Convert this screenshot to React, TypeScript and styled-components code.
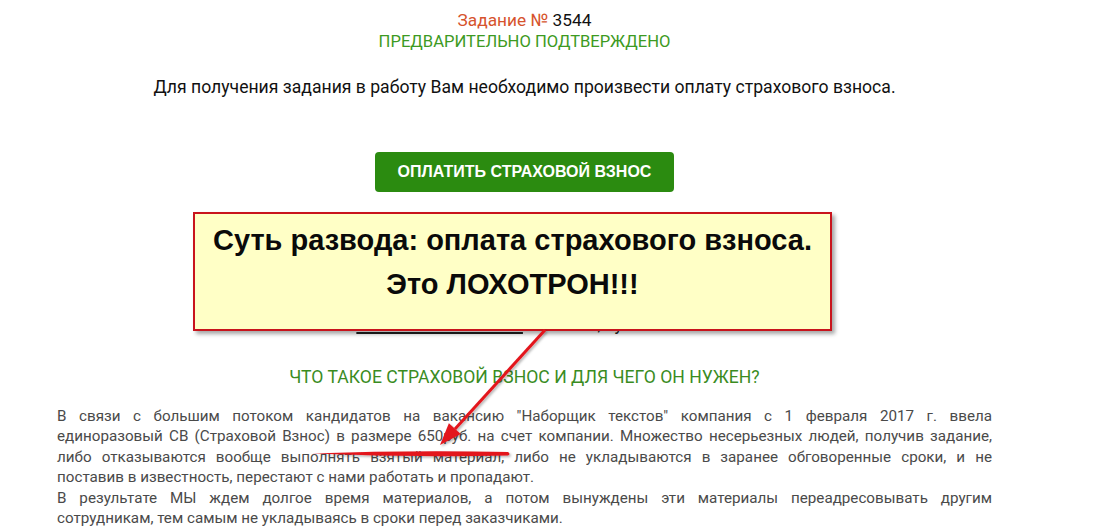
import React from 'react';
import styled, { createGlobalStyle } from 'styled-components';

const GlobalStyle = createGlobalStyle`
  html, body {
    margin: 0;
    padding: 0;
    background: #ffffff;
  }
  body {
    font-family: Roboto, "Noto Sans", Arial, sans-serif;
    width: 1114px;
    height: 527px;
    overflow: hidden;
  }
`;

const Page = styled.div`
  position: relative;
  width: 1114px;
  height: 527px;
  overflow: hidden;
`;

const Content = styled.div`
  width: 935px;
  margin-left: 57px;
  padding-top: 9px;
  display: flex;
  flex-direction: column;
  align-items: center;
`;

const TaskTitle = styled.div`
  font-size: 17.3px;
  line-height: 22px;
  color: #111;
`;

const TaskLabel = styled.span`
  color: #d6532d;
`;

const Status = styled.div`
  font-size: 16.6px;
  line-height: 22px;
  color: #3d9a22;
`;

const Lead = styled.p`
  margin: 23px 0 0;
  font-size: 17.6px;
  line-height: 22px;
  color: #111;
`;

const PayButton = styled.button`
  margin-top: 54px;
  width: 299px;
  height: 40px;
  border: none;
  border-radius: 4px;
  background: #2b8b10;
  color: #fff;
  font-family: "Liberation Sans", Arial, sans-serif;
  font-weight: 700;
  font-size: 16px;
  cursor: pointer;
`;

const HiddenNote = styled.div`
  margin-top: 121px;
  font-size: 17.6px;
  line-height: 22px;
  color: #222;

  u {
    text-decoration-thickness: 2px;
    text-underline-offset: 2px;
  }
`;

const Heading = styled.h3`
  margin: 31px 0 0;
  font-weight: 400;
  font-size: 17.6px;
  line-height: 22px;
  color: #3a8c1f;
`;

const Paragraph = styled.div`
  margin-top: 18px;
  align-self: stretch;
  font-size: 15.2px;
  line-height: 20.4px;
  color: #4a4a4a;
`;

const Line = styled.div<{ $last?: boolean }>`
  white-space: nowrap;
  text-align: justify;
  text-align-last: ${(p) => (p.$last ? 'left' : 'justify')};
`;

const Callout = styled.div`
  position: absolute;
  left: 193px;
  top: 212px;
  width: 639px;
  height: 119px;
  box-sizing: border-box;
  padding-top: 11px;
  background: #ffffc6;
  border: 2px solid #c8141c;
  box-shadow: 3px 3px 4px rgba(0, 0, 0, 0.35);
  font-family: "Liberation Sans", Arial, sans-serif;
  font-weight: 700;
  font-size: 29px;
  color: #0a0a0a;
  text-align: center;
`;

const CalloutLine = styled.div`
  line-height: 31px;
  & + & {
    margin-top: 13px;
  }
`;

const Overlay = styled.svg`
  position: absolute;
  left: 0;
  top: 0;
  pointer-events: none;
`;

const paragraphLines: { text: string; last?: boolean }[] = [
  { text: 'В связи с большим потоком кандидатов на вакансию "Наборщик текстов" компания с 1 февраля 2017 г. ввела' },
  { text: 'единоразовый СВ (Страховой Взнос) в размере 650руб. на счет компании. Множество несерьезных людей, получив задание,' },
  { text: 'либо отказываются вообще выполнять взятый материал, либо не укладываются в заранее обговоренные сроки, и не' },
  { text: 'поставив в известность, перестают с нами работать и пропадают.', last: true },
  { text: 'В результате МЫ ждем долгое время материалов, а потом вынуждены эти материалы переадресовывать другим' },
  { text: 'сотрудникам, тем самым не укладываясь в сроки перед заказчиками.', last: true },
];

export default function App() {
  return (
    <Page>
      <GlobalStyle />
      <Content>
        <TaskTitle>
          <TaskLabel>Задание №</TaskLabel> 3544
        </TaskTitle>
        <Status>ПРЕДВАРИТЕЛЬНО ПОДТВЕРЖДЕНО</Status>
        <Lead>Для получения задания в работу Вам необходимо произвести оплату страхового взноса.</Lead>
        <PayButton>ОПЛАТИТЬ СТРАХОВОЙ ВЗНОС</PayButton>
        <HiddenNote>
          <u>Начать выполнение</u> — 3 часа, сумма 950
        </HiddenNote>
        <Heading>ЧТО ТАКОЕ СТРАХОВОЙ ВЗНОС И ДЛЯ ЧЕГО ОН НУЖЕН?</Heading>
        <Paragraph>
          {paragraphLines.map((l, i) => (
            <Line key={i} $last={l.last}>
              {l.text}
            </Line>
          ))}
        </Paragraph>
      </Content>

      <Callout>
        <CalloutLine>Суть развода: оплата страхового взноса.</CalloutLine>
        <CalloutLine>Это ЛОХОТРОН!!!</CalloutLine>
      </Callout>

      <Overlay width="1114" height="527" viewBox="0 0 1114 527">
        <defs>
          <filter id="soft" x="-20%" y="-20%" width="140%" height="140%">
            <feDropShadow dx="1.5" dy="1.5" stdDeviation="1" floodColor="#000" floodOpacity="0.3" />
          </filter>
        </defs>
        <g filter="url(#soft)" fill="#e3141c" stroke="none">
          <path d="M543.9 329 L546.1 331 L456.1 430 L453.9 428 Z" />
          <path d="M440 445 L448.9 423.3 L460.7 434.1 Z" />
          <path d="M312 453.5 Q410 450 508 452 Q511 454 508 455.5 Q410 457.5 312 453.5 Z" />
        </g>
      </Overlay>
    </Page>
  );
}
